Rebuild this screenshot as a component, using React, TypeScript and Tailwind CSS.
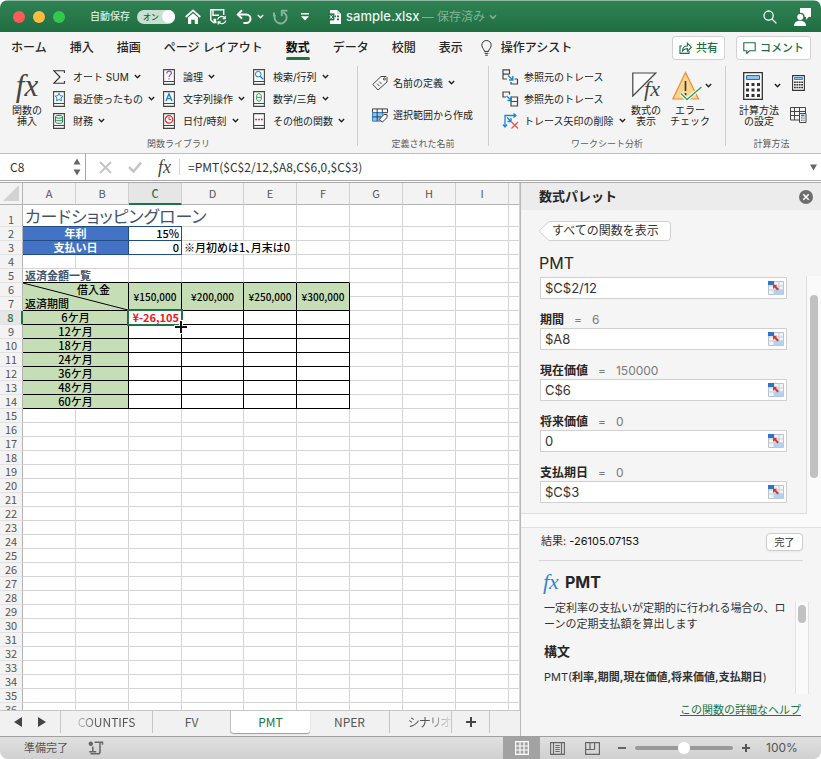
import React, { useState } from "react";
import clsx from "clsx";

// the last column has no letter, it takes whatever width is left
const columns = ["A", "B", "C", "D", "E", "F", "G", "H", "I", ""];
const rowNumbers = Array.from({ length: 36 }, (_, i) => i + 1);
const terms = ["6ケ月", "12ケ月", "18ケ月", "24ケ月", "36ケ月", "48ケ月", "60ケ月"];
const amounts = ["¥150,000", "¥200,000", "¥250,000", "¥300,000"];

const args = [
  { id: "rate", label: "利率", preview: "", value: "$C$2/12" },
  { id: "nper", label: "期間", preview: "6", value: "$A8" },
  { id: "pv", label: "現在価値", preview: "150000", value: "C$6" },
  { id: "fv", label: "将来価値", preview: "0", value: "0" },
  { id: "type", label: "支払期日", preview: "0", value: "$C$3" },
];

function Chevron({ className = "w-[7px]" }: { className?: string }) {
  return (
    <svg viewBox="0 0 8 6" className={clsx("shrink-0", className)} fill="none" stroke="currentColor" strokeWidth="1.6">
      <path d="M1 1.2 4 4.4 7 1.2" />
    </svg>
  );
}

function Fx({ className }: { className?: string }) {
  return (
    <span aria-hidden="true" className={clsx("font-['Liberation_Serif',serif] italic", className)}>
      fx
    </span>
  );
}

/* ---------- title bar ---------- */

function TitleBar() {
  const [autoSave, setAutoSave] = useState(true);
  return (
    <header className="flex h-8 shrink-0 items-center border-t border-[#8fb9a0] bg-linear-to-b from-[#2f8253] to-[#1f6e42] pr-[10px] pl-[13px] text-white">
      <div className="flex gap-2">
        <button aria-label="閉じる" className="size-3 rounded-full bg-[#fc5b57]" />
        <button aria-label="しまう" className="size-3 rounded-full bg-[#fdbc40]" />
        <button aria-label="拡大" className="size-3 rounded-full bg-[#34c84a]" />
      </div>
      <label className="ml-[25px] flex items-center gap-[7px] text-[10px] font-medium text-[#d9eadf]">
        自動保存
        <input type="checkbox" className="peer sr-only" checked={autoSave} onChange={() => setAutoSave(!autoSave)} />
        <span className="flex h-[14px] w-[38px] items-center justify-between rounded-full bg-[#c9dfd1] pl-[6px] text-[8px] text-[#225c3b]">
          {autoSave ? "オン" : "オフ"}
          <span className="size-[13px] rounded-full bg-white" />
        </span>
      </label>
      <button aria-label="ホーム" className="ml-[10px]">
        <svg viewBox="0 0 16 16" className="size-4" fill="none" stroke="white" strokeWidth="1.7">
          <path d="M.7 8 8 1.4 15.3 8" />
          <path d="M3 8.6 8 4.2l5 4.4V15H9.8v-4.2H6.2V15H3z" fill="white" stroke="none" />
        </svg>
      </button>
      <button aria-label="保存" className="ml-[9px]">
        <svg viewBox="0 0 17 16" className="h-4 w-[17px]" fill="none" stroke="white" strokeWidth="1.4">
          <path d="M6.500 13.500H3.500L.8 11V.8h12.900V6" />
          <path d="M3 .8v5.400h6" />
          <path d="M3.500 13.500v-3.700h2.700v3.700z" fill="white" stroke="none" />
          <path d="M7.600 10.600a4 4 0 0 1 7.200-1.400M15.200 7v2.600h-2.600M15.800 11.600a4 4 0 0 1-7.200 1.400M8.200 15.400v-2.600h2.600" strokeWidth="1.2" />
        </svg>
      </button>
      <button aria-label="元に戻す" className="ml-[9px] flex items-center gap-[5px]">
        <svg viewBox="0 0 16 16" className="size-4" fill="none" stroke="white" strokeWidth="2">
          <path d="M6 1.200 1.800 5.400 6 9.600" />
          <path d="M2 5.400h8.200a4.200 4.200 0 0 1 0 8.600H7.400" />
        </svg>
        <Chevron />
      </button>
      <button aria-label="やり直し" className="ml-[9px] opacity-45">
        <svg viewBox="0 0 16 16" className="size-4" fill="none" stroke="white" strokeWidth="1.900">
          <path d="M9.500 2.800a6 6 0 1 1-7.300 3M1 3.500v4" />
          <path d="M14.500 1.600H8.800v5.600" />
        </svg>
      </button>
      <button aria-label="カスタマイズ" className="ml-[12px]">
        <svg viewBox="0 0 8 8" className="size-2" fill="white">
          <path d="M0 0h8v1.500H0zM0 3.200h8L4 7.600z" />
        </svg>
      </button>
      <div className="ml-[19px] flex min-w-0 items-center">
        <svg viewBox="0 0 13 14" className="h-[14px] w-[13px] shrink-0">
          <path d="M2 0h7l4 4v10H2z" fill="white" />
          <path d="M9 0v4h4z" fill="#cfe3d7" />
          <path d="M9 5.400h2v1.800H9zM9 8.400h2v1.800H9zM6.600 5.400h1.400v1.800H6.600z" fill="#217346" />
          <path d="M0 3.400h6.400v7H0z" fill="#1f7345" />
          <path d="m1.800 5.200 2.800 3.600M4.600 5.200 1.800 8.800" stroke="white" strokeWidth="1" />
        </svg>
        <span className="ml-[5px] text-[13px] font-medium text-[#eaf4ee]">sample.xlsx</span>
        <span className="ml-[2px] truncate text-[12px] text-[#80b296]">— 保存済み</span>
        <Chevron className="ml-1 w-2 text-[#80b296]" />
      </div>
      <button aria-label="検索" className="ml-auto">
        <svg viewBox="0 0 14 14" className="size-[14px]" fill="none" stroke="white" strokeWidth="1.300">
          <circle cx="5.600" cy="5.600" r="4.600" />
          <path d="m9 9 4.400 4.400" />
        </svg>
      </button>
      <button aria-label="アカウント" className="ml-[17px]">
        <svg viewBox="0 0 17 18" className="h-[18px] w-[17px]" fill="white">
          <path d="M6 0h11v9h-2.400L12 12V9h-1.200A4.600 4.600 0 0 0 6 4.800z" />
          <circle cx="6.200" cy="9" r="3" />
          <path d="M0 18c0-3.400 2.400-5.200 6-5.200s6 1.800 6 5.200z" />
        </svg>
      </button>
    </header>
  );
}

/* ---------- ribbon ---------- */

const tabs = ["ホーム", "挿入", "描画", "ページ レイアウト", "数式", "データ", "校閲", "表示"];

function RibbonTabs() {
  return (
    <nav className="flex h-8 shrink-0 items-center pr-[10px] pl-[11px] text-[12px] font-medium text-[#262626]">
      <div className="flex gap-[23px]">
        {tabs.map((t) => (
          <button key={t} className={clsx("relative whitespace-nowrap", t === "数式" && "font-bold text-[#111]")}>
            {t}
            {t === "数式" && <span className="absolute inset-x-0 -bottom-[3px] h-[3px] rounded-full bg-[#217346]" />}
          </button>
        ))}
      </div>
      <button className="ml-[18px] flex items-center gap-[9px] whitespace-nowrap">
        <svg viewBox="0 0 11 16" className="h-4 w-[11px]" fill="none" stroke="#333">
          <path d="M3.400 11.400C3.400 9 .8 8.200.8 5.200a4.700 4.700 0 0 1 9.400 0c0 3-2.600 3.800-2.600 6.200zM3.600 13.300h3.800M4.200 15.200h2.600" />
        </svg>
        操作アシスト
      </button>
      <div className="ml-auto flex gap-[11px] text-[11px] text-[#1f6e43]">
        <button className="flex h-6 items-center gap-1 rounded-[3px] border border-[#d2d2d2] bg-white px-[6px]">
          <svg viewBox="0 0 13 12" className="h-3 w-[13px]" fill="none" stroke="currentColor" strokeWidth="1.100">
            <path d="M3 4H1v7.400h9V9" />
            <path d="M3.400 9C3.600 5.800 5.400 4 8.400 4V1.200l4 4-4 4V6.600C6 6.600 4.600 7.300 3.400 9z" />
          </svg>
          共有
        </button>
        <button className="flex h-6 items-center gap-1 rounded-[3px] border border-[#d2d2d2] bg-white px-[6px]">
          <svg viewBox="0 0 13 12" className="h-3 w-[13px]" fill="none" stroke="currentColor" strokeWidth="1.100">
            <path d="M.8.8h11.400v8H6.600l-2.800 2.600V8.800h-3z" />
          </svg>
          コメント
        </button>
      </div>
    </nav>
  );
}

function Book({ children }: { children: React.ReactNode }) {
  return (
    <svg viewBox="0 0 12 16" className="h-4 w-3 shrink-0" fill="none">
      <path d="M.6.6h10.800v14.800H.6z" fill="#fafafa" stroke="#444" strokeWidth="1.100" />
      <path d="M.6 12.500h10.800" stroke="#444" />
      {children}
    </svg>
  );
}

function Item({ icon, text, menu = true }: { icon: React.ReactNode; text: string; menu?: boolean }) {
  return (
    <button className="flex h-[22px] items-center gap-[5px] whitespace-nowrap">
      <span className="mr-[3px]">{icon}</span>
      <span>{text}</span>
      {menu && <Chevron />}
    </button>
  );
}

function Group({ label, className, children }: { label: string; className: string; children: React.ReactNode }) {
  return (
    <section className={clsx("flex h-20 flex-col border-r border-[#cfcfcf] last:border-r-0", className)}>
      <div className="flex h-[70px] shrink-0 items-start">{children}</div>
      <h2 className="text-center text-[9px] leading-4 whitespace-nowrap text-[#5c5c5c]">{label}</h2>
    </section>
  );
}

function BigButton({ icon, lines }: { icon: React.ReactNode; lines: string[] }) {
  return (
    <button className="flex w-10 flex-col items-center leading-[11px]">
      <span className="flex h-[39px] items-center">{icon}</span>
      {lines.map((l) => (
        <span key={l} className="whitespace-nowrap">
          {l}
        </span>
      ))}
    </button>
  );
}

function TraceItem({ text, menu = false, children }: { text: string; menu?: boolean; children: React.ReactNode }) {
  return (
    <button className="flex h-[22px] items-center gap-[5px] whitespace-nowrap">
      <svg viewBox="0 0 17 16" className="h-4 w-[17px] shrink-0" fill="none" stroke="#444" strokeWidth="1.200">
        {children}
      </svg>
      {text}
      {menu && <Chevron />}
    </button>
  );
}

function Ribbon() {
  return (
    <div className="flex h-[89px] shrink-0 overflow-hidden pt-[2px] text-[10px] text-[#222]">
      <Group label="関数ライブラリ" className="w-[358px] shrink-0">
        <div className="pl-[7px]">
          <BigButton icon={<Fx className="text-[31px] leading-none text-[#444]" />} lines={["関数の", "挿入"]} />
        </div>
        <div className="ml-[6px] w-[110px]">
          <Item
            text="オート SUM"
            icon={
              <svg viewBox="0 0 12 14" className="h-[14px] w-3" fill="none" stroke="#333" strokeWidth="1.100">
                <path d="M11.400 3V.7H.8L7 7 .8 13.300h10.600V11" />
              </svg>
            }
          />
          <Item
            text="最近使ったもの"
            icon={
              <Book>
                <path d="m6 2.200 1.200 2.500 2.800.4-2 1.900.5 2.800L6 8.500 3.500 9.800 4 7 2 5.100l2.800-.4z" stroke="#1d87d6" />
              </Book>
            }
          />
          <Item
            text="財務"
            icon={
              <Book>
                <ellipse cx="6" cy="3.800" rx="3.500" ry="1.400" stroke="#1e8a4c" />
                <path d="M2.500 3.800v5.200c0 1.800 7 1.800 7 0V3.800M2.500 6.400c0 1.800 7 1.800 7 0" stroke="#1e8a4c" />
              </Book>
            }
          />
        </div>
        <div className="w-[90px]">
          <Item
            text="論理"
            icon={
              <Book>
                <path d="M3.800 4.400c0-3 4.600-2.800 4.600-.2C8.400 5.800 6 6 6 8M6 9.200v1.400" stroke="#a443b5" strokeWidth="1.200" />
              </Book>
            }
          />
          <Item
            text="文字列操作"
            icon={
              <Book>
                <path d="M3 10 6 2.800 9 10M4 7.600h4" stroke="#1d7fd0" strokeWidth="1.400" />
              </Book>
            }
          />
          <Item
            text="日付/時刻"
            icon={
              <Book>
                <circle cx="6" cy="6.400" r="3.700" stroke="#e8262b" strokeWidth="1.200" />
                <path d="M6 4v2.600h2" stroke="#e8262b" />
              </Book>
            }
          />
        </div>
        <div>
          <Item
            text="検索/行列"
            icon={
              <Book>
                <circle cx="5.200" cy="5.200" r="2.800" stroke="#1d7fd0" />
                <path d="m7.200 7.200 3 3" stroke="#1d7fd0" strokeWidth="1.300" />
              </Book>
            }
          />
          <Item
            text="数学/三角"
            icon={
              <Book>
                <ellipse cx="6" cy="6.400" rx="2.600" ry="3.900" stroke="#35a862" />
                <path d="M3.400 6.400h5.200" stroke="#35a862" />
              </Book>
            }
          />
          <Item
            text="その他の関数"
            icon={
              <Book>
                <path d="M2.200 6.500h1.800M5.100 6.500h1.800M8 6.500h1.800" stroke="#e8262b" strokeWidth="1.600" />
              </Book>
            }
          />
        </div>
      </Group>

      <Group label="定義された名前" className="w-[131px] shrink-0">
        <div className="flex flex-col gap-[10px] pt-[6px] pl-[14px]">
          <button className="flex h-[22px] items-center gap-[5px] whitespace-nowrap">
            <svg viewBox="0 0 16 16" className="size-4" fill="#fafafa" stroke="#444">
              <path d="M9 1.500h5l1 1v4.500l-9 8L.8 9.400z" />
              <circle cx="12.400" cy="4" r="1" />
              <path d="m5 8.600 2.500 2.600M7.200 6.600l2.500 2.600" />
            </svg>
            名前の定義
            <Chevron />
          </button>
          <button className="flex h-[22px] items-center gap-[5px] whitespace-nowrap">
            <svg viewBox="0 0 17 15" className="h-[15px] w-4" fill="none" stroke="#333">
              <path d="M.5.5h16v4H.5z" fill="#fafafa" />
              <path d="M.5 4.500h11v9H.5z" fill="#8fc4ef" stroke="#1d7fd0" />
              <path d="M.5 9h9M5.500.5v13M11 .5v4" />
              <path d="M12.500 6.500h3.500v3.200l-5 4.800-3-3z" fill="#fafafa" />
            </svg>
            選択範囲から作成
          </button>
        </div>
      </Group>

      <Group label="ワークシート分析" className="w-[237px] shrink-0">
        <div className="w-[137px] pl-[13px]">
          <TraceItem text="参照元のトレース">
            <path d="M7.500 5V.8H1V10h4M1 5.200h6.500M15.500 10v5H9v-2M12.500 10h3" />
            <path d="m6 6.500 4.500 4M10.800 7v4H7" stroke="#1d87d6" strokeWidth="1.400" />
          </TraceItem>
          <TraceItem text="参照先のトレース">
            <path d="M4 6H1V1h6.500v2.500M9 6h6.500v9H9zM9 10.500h6.500" />
            <path d="m4.500 5 4.500 4M9.300 5.500v4H5.500" stroke="#1d87d6" strokeWidth="1.400" />
          </TraceItem>
          <TraceItem text="トレース矢印の削除" menu>
            <path
              d="M3 14V2.500h11M11.500.5l2.500 2-2.500 2M1 11.500l2 2.500 2-2.500M5 4.500l4 4M9 5v3.500H5.500"
              stroke="#1d87d6"
              strokeWidth="1.300"
            />
            <path d="m9.500 9 6.500 6.500M16 9l-6.500 6.500" stroke="#e8504f" />
          </TraceItem>
        </div>
        <div className="flex gap-1">
          <BigButton
            lines={["数式の", "表示"]}
            icon={
              <span className="relative block h-[28px] w-[28px]">
                <svg viewBox="0 0 28 28" className="size-7" fill="none" stroke="#444" strokeWidth="1.200">
                  <path d="M.8 24V1h23z" fill="#fafafa" />
                </svg>
                <Fx className="absolute right-0 bottom-0 text-[22px] leading-[22px] text-[#444]" />
              </span>
            }
          />
          <BigButton
            lines={["エラー", "チェック"]}
            icon={
              <svg viewBox="0 0 30 30" className="mr-[7px] size-[30px]" fill="none">
                <path d="M13.500 1.500 26.500 28H.8z" fill="#fcd68a" stroke="#ee8b3c" strokeWidth="1.200" />
                <path d="M13.500 10v10M13.500 22v2.500" stroke="#333" strokeWidth="1.600" />
                <path d="m9 22.500 6 6L29.500 16" stroke="white" strokeWidth="3.600" />
                <path d="m9 22.500 6 6L29.500 16" stroke="#2aa25a" strokeWidth="1.400" />
              </svg>
            }
          />
        </div>
        <button aria-label="エラー チェックのメニュー" className="-ml-[5px] flex h-[39px] items-center">
          <Chevron />
        </button>
      </Group>

      <Group label="計算方法" className="min-w-[95px] flex-1 pr-1">
        <div className="pl-[13px]">
          <BigButton
            lines={["計算方法", "の設定"]}
            icon={
              <svg viewBox="0 0 20 28" className="mr-[12px] h-7 w-5" fill="none">
                <path d="M.7.7h18.600v26.600H.7z" fill="#fafafa" stroke="#333" strokeWidth="1.300" />
                <path d="M3.500 3.500h13v4h-13z" fill="#8fc4ef" stroke="#1d6fc0" />
                <path d="M3 12.500h14M3 18h14M3 23.500h14" stroke="#333" strokeWidth="3" strokeDasharray="3 2.500" />
              </svg>
            }
          />
        </div>
        <button aria-label="計算方法のメニュー" className="-ml-[5px] flex h-[39px] items-center">
          <Chevron />
        </button>
        <div className="ml-[9px] flex flex-col items-center gap-4 pt-[9px]">
          <button aria-label="今すぐ計算">
            <svg viewBox="0 0 13 16" className="h-4 w-[13px]" fill="none">
              <path d="M.6.6h11.800v14.800H.6z" fill="#fafafa" stroke="#333" strokeWidth="1.100" />
              <path d="M2.500 2.500h8v2h-8z" fill="#8fc4ef" stroke="#1d6fc0" strokeWidth=".8" />
              <path d="M2 7.200h9M2 9.800h9M2 12.400h9" stroke="#333" strokeWidth="1.500" strokeDasharray="1.800 .6" />
            </svg>
          </button>
          <button aria-label="シートの計算">
            <svg viewBox="0 0 17 16" className="h-4 w-[17px]" fill="none" stroke="#444">
              <path d="M15.500 6V.5H.5v12.500H9M.5 4.500h15M.5 8.500H9M4.500.5V13M9.500.5V8" />
              <path d="M9.500 6.500h6.500v9H9.500z" fill="#fafafa" />
              <path d="M11 8.500h3.600" stroke="#1d6fc0" strokeWidth="1.400" />
              <path d="M11 11h3.600M11 13.200h3.600" strokeDasharray="1 .4" />
            </svg>
          </button>
        </div>
      </Group>
    </div>
  );
}

/* ---------- formula bar ---------- */

function FormulaBar() {
  return (
    <div className="flex h-[30px] shrink-0 items-stretch border-t border-b border-t-[#bdbdbd] border-b-[#a9a9a9] bg-white font-['Noto_Sans_CJK_JP',sans-serif]">
      <div className="mb-[1px] flex w-full border-b border-[#a9a9a9]">
        <div className="flex w-[86px] shrink-0 items-center border-r border-[#a9a9a9] pr-1">
          <input aria-label="名前ボックス" defaultValue="C8" className="w-0 flex-1 pl-[10px] text-[12px] text-[#333] outline-none" />
          <svg viewBox="0 0 8 20" className="h-5 w-2" fill="#666">
            <path d="M4 1.500 7.500 7.500h-7zM4 18.500.5 12.500h7z" />
          </svg>
        </div>
        <div className="flex shrink-0 items-center pl-[13px]">
          <button aria-label="キャンセル">
            <svg viewBox="0 0 13 13" className="size-[13px]" stroke="#c4c4c4" strokeWidth="1.900">
              <path d="m1 1 11 11M12 1 1 12" />
            </svg>
          </button>
          <button aria-label="入力" className="ml-4">
            <svg viewBox="0 0 14 12" className="h-3 w-[14px]" fill="none" stroke="#c4c4c4" strokeWidth="2.600">
              <path d="m1 6 4.500 4.500L13 1.500" />
            </svg>
          </button>
          <button aria-label="関数の挿入" className="ml-4 flex">
            <Fx className="text-[18px] leading-6 text-[#444]" />
          </button>
          <span className="ml-2 h-4 w-px bg-[#d5d5d5]" />
        </div>
        <input
          aria-label="数式バー"
          defaultValue="=PMT($C$2/12,$A8,C$6,0,$C$3)"
          className="min-w-0 flex-1 pl-2 text-[12px] text-[#333] outline-none"
        />
        <button aria-label="数式バーを展開" className="px-1">
          <svg viewBox="0 0 7 7" className="size-[7px]" fill="#666">
            <path d="M0 .5h7L3.500 6.500z" />
          </svg>
        </button>
      </div>
    </div>
  );
}

/* ---------- sheet ---------- */

const gridLine = "border-r border-b border-[#d4d4d4]";
const blackLine = "border-r border-b border-black";
const blueLine = "border-r border-b border-[#1f4e86]";

function blanks(from: number, line = gridLine, to = columns.length) {
  return columns.slice(from, to).map((_, i) => <td key={i} className={line} />);
}

function rowCells(n: number) {
  if (n === 1)
    return (
      <>
        <td
          colSpan={3}
          className="overflow-visible border-b border-[#1f4e86] pl-[2px] text-[17px] leading-[21px] font-normal whitespace-nowrap text-[#44546a] [font-feature-settings:'palt']"
        >
          カードショッピングローン
        </td>
        {blanks(3)}
      </>
    );
  if (n === 2 || n === 3)
    return (
      <>
        <th colSpan={2} className={clsx(blueLine, "bg-[#4472c4] font-bold text-white")}>
          {n === 2 ? "年利" : "支払い日"}
        </th>
        <td className={clsx(blueLine, "pr-[2px] text-right")}>{n === 2 ? "15%" : "0"}</td>
        {n === 2 ? (
          blanks(3)
        ) : (
          <>
            <td colSpan={2} className={clsx(gridLine, "pl-[2px] whitespace-nowrap [font-feature-settings:'palt']")}>
              ※月初めは1、月末は0
            </td>
            {blanks(5)}
          </>
        )}
      </>
    );
  if (n === 5)
    return (
      <>
        <td colSpan={2} className="border-r border-b border-r-[#d4d4d4] border-b-black pl-[2px] font-bold whitespace-nowrap text-[#44546a]">
          返済金額一覧
        </td>
        {blanks(2, "border-r border-b border-r-[#d4d4d4] border-b-black", 6)}
        {blanks(6)}
      </>
    );
  if (n === 6)
    return (
      <>
        <th rowSpan={2} colSpan={2} className={clsx(blackLine, "relative bg-[#c6deb6] font-medium")}>
          <svg viewBox="0 0 105 27" preserveAspectRatio="none" className="absolute inset-0 size-full" stroke="black">
            <path d="M0 0 105 27" />
          </svg>
          <div className="pr-[18px] text-right leading-[13px]">借入金</div>
          <div className="pl-[2px] text-left leading-[14px]">返済期間</div>
        </th>
        {amounts.map((a) => (
          <th key={a} rowSpan={2} className={clsx(blackLine, "bg-[#c6deb6] text-[10px] font-medium")}>
            {a}
          </th>
        ))}
        {blanks(6)}
      </>
    );
  if (n === 7) return blanks(6);
  if (n >= 8 && n <= 14)
    return (
      <>
        <th colSpan={2} className={clsx(blackLine, "bg-[#c6deb6] font-medium")}>
          {terms[n - 8]}
        </th>
        {n === 8 ? (
          <td className={clsx(blackLine, "relative pr-[2px] text-right font-bold whitespace-nowrap text-[#f5141b]")}>
            ¥-26,105
            <span className="absolute -top-[2px] -right-[2px] -bottom-[2px] -left-[2px] border-2 border-[#1f7246]" />
            <svg viewBox="0 0 14 14" className="absolute -right-[7px] -bottom-[10px] z-10 size-[14px]">
              <path d="M7 0v14M0 7h14" stroke="white" strokeWidth="4" />
              <path d="M7 1v12M1 7h12" stroke="#111" strokeWidth="2" />
            </svg>
          </td>
        ) : (
          <td className={blackLine} />
        )}
        {blanks(3, blackLine, 6)}
        {blanks(6)}
      </>
    );
  return blanks(0);
}

function Sheet() {
  return (
    <div className="min-h-0 flex-1 overflow-hidden bg-white">
      <table className="w-full table-fixed border-separate border-spacing-0 font-['Noto_Sans_CJK_JP',sans-serif] text-[11px] leading-[13px] font-medium text-black">
        <colgroup>
          <col className="w-[23px]" />
          {columns.map((c) => (
            <col key={c} className={clsx(c === "D" && "w-[62px]", c !== "D" && c !== "" && "w-[53px]")} />
          ))}
        </colgroup>
        <thead>
          <tr className="h-[22px] bg-[#f3f3f3] text-[#555]">
            <th className="relative border-r border-b border-[#b4b4b4]">
              <svg viewBox="0 0 16 16" className="absolute right-[3px] bottom-[3px] size-4" fill="#d2d2d2">
                <path d="M16 0v16H0z" />
              </svg>
            </th>
            {columns.map((c) => (
              <th
                key={c}
                className={clsx(
                  "border-r border-r-[#d0d0d0]",
                  c === "C"
                    ? "border-b-2 border-b-[#1f7246] bg-[#e6e6e6] font-medium text-[#1f7246]"
                    : "border-b border-b-[#b4b4b4] font-normal"
                )}
              >
                {c}
              </th>
            ))}
          </tr>
        </thead>
        <tbody>
          {rowNumbers.map((n) => (
            <tr key={n} className={n === 1 ? "h-[22px]" : "h-[14px]"}>
              <th
                className={clsx(
                  "border-b border-b-[#e2e2e2] text-center align-bottom",
                  n === 8
                    ? "border-r-2 border-r-[#1f7246] bg-[#e6e6e6] font-medium text-[#1f7246]"
                    : "border-r border-r-[#b4b4b4] bg-[#f3f3f3] font-normal text-[#555]"
                )}
              >
                {n}
              </th>
              {rowCells(n)}
            </tr>
          ))}
        </tbody>
      </table>
    </div>
  );
}

function SheetTabs() {
  const tab = "h-[22px] border-r border-[#c6c6c6] text-center whitespace-nowrap";
  return (
    <div className="flex h-[26px] shrink-0 overflow-hidden border-t border-[#c6c6c6] bg-[#f1f1f1] font-['Noto_Sans_CJK_JP',sans-serif] text-[12px] text-[#555]">
      <div className="flex h-[22px] w-[61px] shrink-0 items-center gap-4 border-r border-[#c6c6c6] pl-[14px]">
        <button aria-label="前のシート">
          <svg viewBox="0 0 8 10" className="h-[10px] w-2" fill="#444">
            <path d="M8 0v10L0 5z" />
          </svg>
        </button>
        <button aria-label="次のシート">
          <svg viewBox="0 0 8 10" className="h-[10px] w-2" fill="#444">
            <path d="M0 0v10l8-5z" />
          </svg>
        </button>
      </div>
      <button className={clsx(tab, "w-[92px]")}>
        <span className="[mask-image:linear-gradient(to_right,rgba(0,0,0,.3),black_35%)]">COUNTIFS</span>
      </button>
      <button className={clsx(tab, "w-[78px]")}>FV</button>
      <button className="h-[22px] w-[79px] rounded-b-[3px] bg-white text-[#217346] shadow-[0_1px_1px_#999]">PMT</button>
      <button className={clsx(tab, "w-[80px]")}>NPER</button>
      <button className={clsx(tab, "w-[62px] overflow-hidden pl-[18px] text-left")}>
        <span className="[font-feature-settings:'palt'] [mask-image:linear-gradient(to_right,black_45%,rgba(0,0,0,.15)_95%)]">シナリオ</span>
      </button>
      <button aria-label="シートの追加" className={clsx(tab, "flex w-[38px] items-center justify-center")}>
        <svg viewBox="0 0 10 10" className="size-[10px]" stroke="#444" strokeWidth="2">
          <path d="M5 0v10M0 5h10" />
        </svg>
      </button>
    </div>
  );
}

/* ---------- formula palette ---------- */

function RangeIcon() {
  return (
    <svg viewBox="0 0 16 14" className="h-[14px] w-4">
      <path d="M.5.5h15v13H.5z" fill="#f2f4f7" stroke="#b9c2ce" />
      <path d="M6 .5v13M11 .5v13M.5 5h15M.5 9h15" stroke="#c5cdd8" />
      <path d="M0 0h6v4H0z" fill="#2f74c9" />
      <path d="M6 8.500h9.500v5H6z" fill="#b4d1ef" />
      <path d="M5 3.800h4.200L8 5l3 3-1.600 1.600-3-3L5 8z" fill="#d8382f" />
    </svg>
  );
}

function Palette() {
  return (
    <aside className="flex w-[301px] shrink-0 flex-col border-l border-[#b8b8b8] bg-[#f5f5f5] text-[#333]">
      <div className="flex h-[27px] shrink-0 items-center justify-between bg-[#ececec] pr-2 pl-[18px]">
        <h2 className="text-[13px] font-bold text-[#262626]">数式パレット</h2>
        <button aria-label="閉じる">
          <svg viewBox="0 0 14 14" className="size-[14px]">
            <circle cx="7" cy="7" r="7" fill="#6d6d6d" />
            <path d="m4.300 4.300 5.400 5.400M9.700 4.300 4.300 9.700" stroke="white" strokeWidth="1.600" />
          </svg>
        </button>
      </div>

      <div className="shrink-0 pt-[11px] pl-[18px]">
        <button className="relative block h-5 w-[132px] pl-[13px] text-left text-[12px] leading-5">
          <svg viewBox="0 0 132 20" className="absolute inset-0 size-full" fill="white" stroke="#cfcfcf">
            <path d="M10 .5h118.500a3 3 0 0 1 3 3v13a3 3 0 0 1-3 3H10L1 11q-.8-1 0-2z" />
          </svg>
          <span className="relative">すべての関数を表示</span>
        </button>
        <h3 className="mt-[10px] h-[25px] text-[16px] leading-6 text-[#262626]">PMT</h3>
      </div>

      <div className="flex h-[252px] shrink-0 border-b border-[#e0e0e0] bg-[#fafafa]">
        <div className="h-[238px] flex-1 border-r border-b border-[#dedede] bg-[#f5f5f5] pt-[1px] pl-[19px]">
          {args.map((a, i) => (
            <div key={a.id}>
              {i > 0 && (
                <label htmlFor={a.id} className="flex h-[29px] items-center pt-3 text-[12px] text-[#7a7a7a]">
                  <span className="font-bold text-[#262626]">{a.label}</span>
                  <span className="ml-[10px]">=</span>
                  <span className="ml-[10px]">{a.preview}</span>
                </label>
              )}
              <div className="flex h-[22px] w-[247px] items-center border border-[#d0d0d0] bg-white pr-[2px]">
                <input
                  id={a.id}
                  aria-label={a.label}
                  defaultValue={a.value}
                  className="h-full min-w-0 flex-1 pl-1 text-[13px] outline-none"
                />
                <button aria-label={`${a.label}の範囲を選択`}>
                  <RangeIcon />
                </button>
              </div>
            </div>
          ))}
        </div>
        <div className="w-[14px] pt-[19px] pl-[3px]">
          <div className="h-[183px] w-2 rounded-full bg-[#c1c1c1]" />
        </div>
      </div>

      <div className="mr-[18px] ml-[18px] flex h-[33px] shrink-0 items-center justify-between border-b border-[#d6d6d6] pb-[5px] text-[11px]">
        <p className="pl-[2px]">
          結果: <span className="text-[#111]">-26105.07153</span>
        </p>
        <button className="h-[18px] w-[37px] rounded-[4px] border border-[#cdcdcd] bg-white text-[10px] leading-4 shadow-xs">完了</button>
      </div>

      <h3 className="flex h-[37px] shrink-0 items-center gap-[6px] pt-[5px] pl-[22px] text-[16px] font-bold text-[#262626]">
        <Fx className="text-[22px] leading-6 font-normal text-[#2f86d6]" />
        PMT
      </h3>
      <div className="flex min-h-0 flex-1 pr-[12px] pl-[23px] text-[11px]">
        <div className="flex-1 overflow-hidden leading-4">
          <p className="mt-[2px] w-[245px]">一定利率の支払いが定期的に行われる場合の、ローンの定期支払額を算出します</p>
          <h4 className="mt-[11px] text-[13px] font-bold text-[#262626]">構文</h4>
          <p className="mt-[10px] whitespace-nowrap">
            PMT(<b>利率,期間,現在価値,将来価値,支払期日</b>)
          </p>
        </div>
        <div className="mt-1 h-[92px] w-[14px] border-x border-[#e2e2e2] bg-[#fafafa] px-[2px] pt-[3px]">
          <div className="h-[18px] w-2 rounded-full bg-[#c1c1c1]" />
        </div>
      </div>
      <div className="flex h-[34px] shrink-0 justify-end pr-5 text-[11px]">
        <a href="#help" className="text-[#217346] underline">
          この関数の詳細なヘルプ
        </a>
      </div>
    </aside>
  );
}

/* ---------- status bar ---------- */

function StatusBar() {
  const [zoom, setZoom] = useState(100);
  return (
    <footer className="flex h-[23px] shrink-0 items-center border-t border-[#a0a0a0] bg-linear-to-b from-[#e0e0e0] to-[#d0d0d0] pl-6 text-[11px] text-[#555]">
      <span>準備完了</span>
      <button aria-label="マクロの記録" className="ml-5">
        <svg viewBox="0 0 16 14" className="h-[14px] w-4" fill="none" stroke="#666" strokeWidth="1.500">
          <circle cx="2.800" cy="2.800" r="2.200" fill="#666" stroke="none" />
          <path d="M6.500 1.200h8v2.600M12 1.500V11q0 1.800-2 1.800H2.500M1.200 10.800h7M4.800 5.500v5" />
        </svg>
      </button>
      <div className="ml-auto flex h-full items-center">
        <button aria-label="標準" className="flex h-full w-[37px] items-center justify-center bg-[#a2a2a2]">
          <svg viewBox="0 0 14 14" className="size-[14px]" fill="none" stroke="white" strokeWidth="1.200">
            <path d="M.7.7h12.600v12.600H.7zM.7 5h12.600M.7 9h12.600M5 .7v12.600M9 .7v12.600" />
          </svg>
        </button>
        <button aria-label="ページ レイアウト" className="ml-[10px]">
          <svg viewBox="0 0 15 13" className="h-[13px] w-[15px]" fill="none" stroke="#666" strokeWidth="1.100">
            <path d="M.6.6h13.800v11.800H.6zM3.500.6h8v11.800h-8zM5.300 3.500h4.400M5.300 5.500h4.400M5.300 7.500h4.400M5.300 9.500h4.400" />
          </svg>
        </button>
        <button aria-label="改ページ プレビュー" className="ml-5">
          <svg viewBox="0 0 15 13" className="h-[13px] w-[15px]" fill="none" stroke="#666" strokeWidth="1.200">
            <path d="M.6.6h13.800v11.800H.6zM.6 7.500h9M5 .6v6.900M9.600.6v6.900" />
          </svg>
        </button>
        <button aria-label="縮小" className="ml-[18px]" onClick={() => setZoom(Math.max(10, zoom - 10))}>
          <svg viewBox="0 0 8 8" className="size-2" stroke="#666" strokeWidth="2">
            <path d="M0 4h8" />
          </svg>
        </button>
        <input
          type="range"
          aria-label="ズーム"
          min={10}
          max={190}
          value={zoom}
          onChange={(e) => setZoom(Number(e.target.value))}
          className="mx-[9px] h-1 w-[98px] appearance-none rounded-full bg-[#9a9a9a] [&::-webkit-slider-thumb]:size-3 [&::-webkit-slider-thumb]:appearance-none [&::-webkit-slider-thumb]:rounded-full [&::-webkit-slider-thumb]:bg-white"
        />
        <button aria-label="拡大" onClick={() => setZoom(Math.min(190, zoom + 10))}>
          <svg viewBox="0 0 8 8" className="size-2" stroke="#555" strokeWidth="2">
            <path d="M0 4h8M4 0v8" />
          </svg>
        </button>
        <span className="w-[71px] pl-4 text-[12px]">{zoom}%</span>
      </div>
    </footer>
  );
}

export default function App() {
  return (
    <div className="flex h-screen flex-col overflow-hidden rounded-lg bg-[#f4f4f4] font-['Inter','Noto_Sans_CJK_JP',sans-serif]">
      <TitleBar />
      <RibbonTabs />
      <Ribbon />
      <FormulaBar />
      <main className="flex min-h-0 flex-1">
        <div className="flex min-w-0 flex-1 flex-col">
          <Sheet />
          <SheetTabs />
        </div>
        <Palette />
      </main>
      <StatusBar />
    </div>
  );
}
